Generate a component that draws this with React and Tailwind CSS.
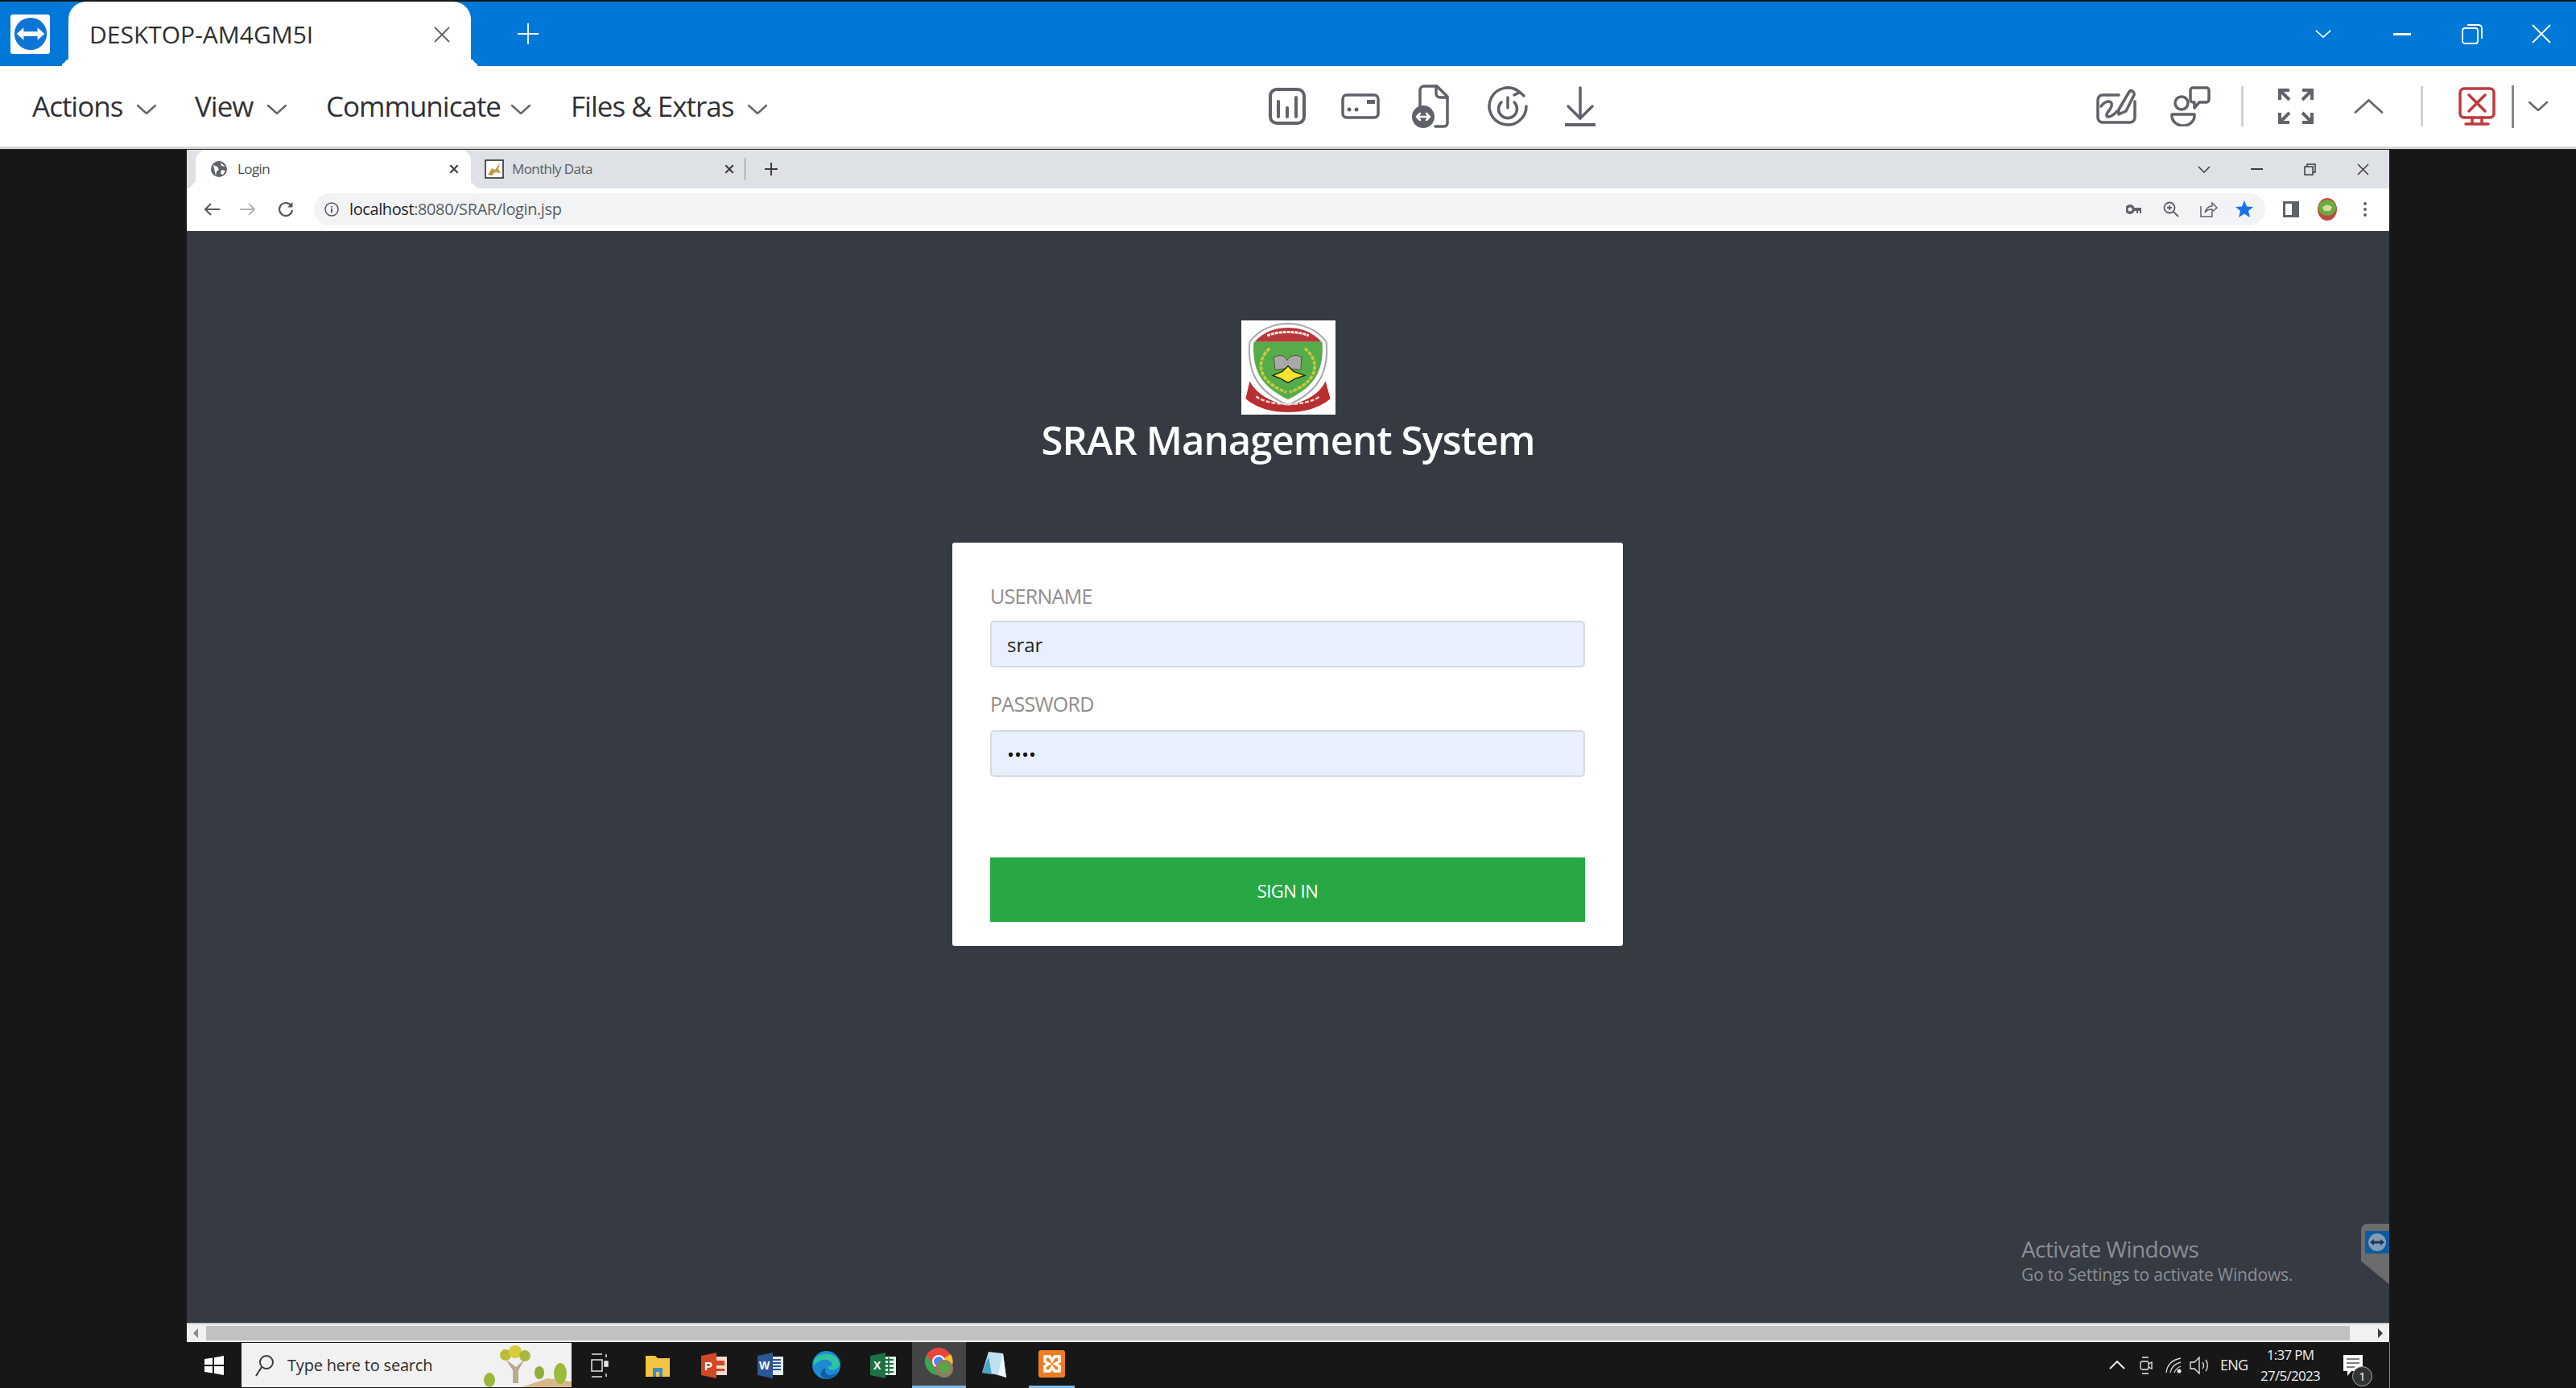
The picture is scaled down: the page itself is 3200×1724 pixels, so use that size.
import React from "react";

const SANS = "font-['Open_Sans','Noto_Sans',sans-serif]";

const TeamViewerLogo = ({ className }) => (
  <svg viewBox="0 0 48 48" className={className}>
    <circle cx="24" cy="24" r="21" fill="#0e75d4" />
    <path d="M6 24 L15 16 V21 H33 V16 L42 24 L33 32 V27 H15 V32 Z" fill="#fff" />
  </svg>
);

const Chevron = ({ className, up, color = "#63666a", width = 2.5 }) => (
  <svg viewBox="0 0 24 12" className={className} fill="none" stroke={color} strokeWidth={width} strokeLinecap="round">
    <path d={up ? "M1 11 L12 1 L23 11" : "M1 1 L12 11 L23 1"} />
  </svg>
);

const MenuItem = ({ label, textClass, chevronClass }) => (
  <div className="flex items-center">
    <span className={textClass}>{label}</span>
    <Chevron className={chevronClass} />
  </div>
);

const RemoteToolbar = () => (
  <div className="flex h-[100px] shrink-0 items-center bg-white">
    <div className={`flex w-[1576px] shrink-0 items-center pl-[40px] text-[35px] tracking-[-1px] text-[#2f3136] ${SANS}`}>
      <MenuItem label="Actions" textClass="w-[130px]" chevronClass="mt-[8px] w-[24px] h-[12px]" />
      <MenuItem label="View" textClass="ml-[48px] w-[90px]" chevronClass="mt-[8px] w-[24px] h-[12px]" />
      <MenuItem label="Communicate" textClass="ml-[49px] w-[230px]" chevronClass="mt-[8px] w-[24px] h-[12px]" />
      <MenuItem label="Files & Extras" textClass="ml-[50px] w-[220px]" chevronClass="mt-[8px] w-[24px] h-[12px]" />
    </div>

    {/* session icons */}
    <svg viewBox="0 0 46 46" className="h-[46px] w-[46px] shrink-0" fill="none" stroke="#5f6268" strokeWidth="4" strokeLinecap="round">
      <rect x="2" y="2" width="42" height="42" rx="8" />
      <path d="M12 17V36M23 25V36M34 12V36" />
    </svg>
    <svg viewBox="0 0 48 32" className="ml-[44px] h-[32px] w-[48px] shrink-0" fill="none" stroke="#5f6268" strokeWidth="3.5">
      <rect x="2" y="2" width="44" height="28" rx="5" />
      <circle cx="10" cy="20" r="2.5" fill="#5f6268" stroke="none" />
      <circle cx="19" cy="20" r="2.5" fill="#5f6268" stroke="none" />
      <rect x="32" y="8" width="10" height="5" fill="#5f6268" stroke="none" />
    </svg>
    <svg viewBox="0 0 48 56" className="ml-[39px] h-[56px] w-[48px] shrink-0" fill="none" stroke="#5f6268" strokeWidth="3.5" strokeLinejoin="round" strokeLinecap="round">
      <path d="M11 28V8a5 5 0 0 1 5-5h16l13 13v33a4 4 0 0 1-4 4H30" />
      <path d="M31 3v9a5 5 0 0 0 5 5h9" />
      <circle cx="15" cy="41" r="14" fill="#5f6268" stroke="none" />
      <path d="M7 41h16M11 37l-4 4 4 4M19 37l4 4-4 4" stroke="#fff" strokeWidth="2.5" />
    </svg>
    <svg viewBox="0 0 50 50" className="ml-[47px] h-[50px] w-[50px] shrink-0" fill="none" stroke="#5f6268" strokeWidth="3.5" strokeLinecap="round" strokeLinejoin="round">
      <path d="M48 25A23 23 0 1 1 40 7.500" />
      <path d="M45 12L40 7.500L33 11" />
      <path d="M17 20a11.500 11.500 0 1 0 16 0M25 14v13" />
    </svg>
    <svg viewBox="0 0 38 50" className="ml-[46px] h-[50px] w-[38px] shrink-0" fill="none" stroke="#5f6268" strokeWidth="3.5" strokeLinecap="round">
      <path d="M19 2V40M4 25L19 40L34 25" />
      <path d="M1 48H37" strokeWidth="4" />
    </svg>

    <svg viewBox="0 0 50 44" className="ml-[622px] h-[44px] w-[50px] shrink-0" fill="none" stroke="#5f6268" strokeWidth="3.5" strokeLinecap="round" strokeLinejoin="round">
      <path d="M28 8H8a6 6 0 0 0-6 6v22a6 6 0 0 0 6 6h34a6 6 0 0 0 6-6V16" />
      <path d="M6 22c6-8 15-8 13 0c-2 6-7 8-6 12c2 3 9-1 13-6" />
      <path d="M28 26L41 4c2-3 7 0 6 4L37 28L28 32Z" />
    </svg>
    <svg viewBox="0 0 50 50" className="ml-[42px] h-[50px] w-[50px] shrink-0" fill="none" stroke="#5f6268" strokeWidth="3.5" strokeLinejoin="round">
      <circle cx="14" cy="21" r="8" />
      <path d="M2 35H30V37A14 12 0 0 1 2 37Z" />
      <path d="M28 2H45a3 3 0 0 1 3 3V17a3 3 0 0 1-3 3H36L30 27V20H28a3 3 0 0 1-3-3V5a3 3 0 0 1 3-3Z" />
    </svg>
    <div className="ml-[38px] h-[50px] w-[3px] shrink-0 bg-[#d2d2d2]" />
    <svg viewBox="0 0 44 44" className="ml-[43px] h-[44px] w-[44px] shrink-0" fill="none" stroke="#5f6268" strokeWidth="4">
      <path d="M2 14V2H14M2 2L14 14M30 2H42V14M42 2L30 14M2 30V42H14M2 42L14 30M30 42H42V30M42 42L30 30" />
    </svg>
    <Chevron up className="ml-[50px] h-[18px] w-[37px] shrink-0" width={1.8} />
    <div className="ml-[46px] h-[50px] w-[3px] shrink-0 bg-[#d2d2d2]" />
    <svg viewBox="0 0 46 48" className="ml-[44px] h-[48px] w-[46px] shrink-0" fill="none" stroke="#c0393b" strokeWidth="3.5" strokeLinecap="round">
      <rect x="2" y="2" width="42" height="36" rx="5" />
      <path d="M13 10L33 30M33 10L13 30M17 38V46M29 38V46M9 46H37" />
    </svg>
    <div className="ml-[20px] h-[53px] w-[3px] shrink-0 bg-[#84868a]" />
    <Chevron className="ml-[18px] h-[12px] w-[24px] shrink-0" />
  </div>
);

const TabClose = ({ className }) => (
  <svg viewBox="0 0 12 12" className={className} fill="none" stroke="#3a3c40" strokeWidth="1.800">
    <path d="M2 2L10 10M10 2L2 10" />
  </svg>
);

const Emblem = () => (
  <svg viewBox="0 0 112 118" className="h-[117px] w-[112px]">
    <path d="M8 27 C20 10 40 4 56 4 C72 4 92 10 104 27 C107 60 98 88 56 106 C14 88 5 60 8 27Z" fill="#fff" stroke="#a5a5aa" strokeWidth="2" />
    <path d="M14 27 C26 13 42 9 56 9 C70 9 86 13 98 27Z" fill="#b8383a" />
    <path d="M13 27 H99 C101 60 92 82 56 99 C20 82 11 60 13 27Z" fill="#56ac49" />
    <path d="M33 35 C16 50 16 76 54 90 M77 35 C96 50 96 76 58 90" fill="none" stroke="#c9cc3e" strokeWidth="3.500" strokeDasharray="5 1.500" />
    <path d="M38 46 C46 42 52 44 55 50 C58 44 66 42 73 46 L72 62 L55 60 L40 62Z" fill="#a9a9a7" stroke="#4c4f48" strokeWidth="1" />
    <path d="M37 69 L49 64 L56 57 L63 64 L77 69 L65 73 L56 78 L47 73Z" fill="#f4e42e" stroke="#1f2a1a" strokeWidth="1.500" />
    <path d="M8 76 C16 92 34 102 56 107 C78 102 96 92 103 76 L109 98 C92 112 72 115 56 115 C40 115 20 112 3 98Z" fill="#b92e30" />
    <path d="M16 95 C32 108 80 108 96 95" fill="none" stroke="#efd8cf" strokeWidth="2.500" strokeDasharray="5 2" />
    <path d="M30 19 C44 13 68 13 82 19" fill="none" stroke="#fbeeee" strokeWidth="3" strokeDasharray="4 1" />
  </svg>
);

const LoginCard = () => (
  <div className={`mr-[1px] mt-[97px] h-[501px] w-[833px] rounded-[3px] bg-white px-[47px] pt-[50px] ${SANS}`}>
    <label className="block h-[32px] text-[25px] leading-[32px] tracking-[-0.7px] text-[#8d8d8d]">USERNAME</label>
    <input
      readOnly
      value="srar"
      className="mt-[15px] block h-[58px] w-full rounded-[5px] border-2 border-[#d5d9e0] bg-[#e8f0fe] px-[19px] text-[24px] text-[#222] outline-none"
    />
    <label className="mt-[29px] block h-[32px] text-[25px] leading-[32px] tracking-[-0.7px] text-[#8d8d8d]">PASSWORD</label>
    <input
      readOnly
      type="password"
      value="srar"
      className="mt-[17px] block h-[58px] w-full rounded-[5px] border-2 border-[#d5d9e0] bg-[#e8f0fe] px-[19px] text-[24px] text-[#111] outline-none"
    />
    <button className="mt-[100px] flex h-[80px] w-full items-center justify-center bg-[#28a745] pt-[3px] text-[22px] tracking-[-0.5px] text-white">
      SIGN IN
    </button>
  </div>
);

const BrowserWindow = () => (
  <div className="relative flex w-[2736px] flex-col">
    {/* tabs */}
    <div className={`flex h-[48px] shrink-0 items-center bg-[#dee1e6] pl-[11px] text-[17px] ${SANS}`}>
      <div className="relative flex h-full w-[342px] items-center rounded-t-[14px] bg-white pl-[19px]">
        <span className="absolute bottom-0 left-[-14px] h-[14px] w-[14px] rounded-br-[14px] shadow-[7px_7px_0_0_#fff]" />
        <span className="absolute bottom-0 right-[-14px] h-[14px] w-[14px] rounded-bl-[14px] shadow-[-7px_7px_0_0_#fff]" />
        <svg viewBox="0 0 20 20" className="h-[20px] w-[20px]">
          <circle cx="10" cy="10" r="10" fill="#5f6368" />
          <path d="M3 5l5 2 2 4-3 2-1 5M12 2l1 4 5 1M13 11l5 1-3 5-3-1Z" fill="#fff" />
        </svg>
        <span className="ml-[13px] tracking-[-0.6px] text-[#4a4c50]">Login</span>
        <TabClose className="ml-auto mr-[14px] h-[14px] w-[14px]" />
      </div>
      <div className="flex h-full w-[340px] items-center pl-[17px]">
        <svg viewBox="0 0 24 24" className="h-[24px] w-[24px]">
          <rect x="1" y="1" width="22" height="22" fill="#fff" stroke="#222" strokeWidth="1.500" />
          <path d="M4 19L9 11L13 13L19 4L17 12L20 17L13 16L9 20Z" fill="#c59a4a" />
        </svg>
        <span className="ml-[10px] tracking-[-0.6px] text-[#5b5d61]">Monthly Data</span>
        <TabClose className="ml-auto mr-[12px] h-[14px] w-[14px]" />
      </div>
      <div className="h-[28px] w-[1px] bg-[#8a8c90]" />
      <svg viewBox="0 0 18 18" className="ml-[23px] h-[18px] w-[18px]" fill="none" stroke="#3a3c40" strokeWidth="2">
        <path d="M9 1V17M1 9H17" />
      </svg>
      <svg viewBox="0 0 16 9" className="ml-auto h-[9px] w-[16px]" fill="none" stroke="#3a3c40" strokeWidth="1.500">
        <path d="M1 1L8 8L15 1" />
      </svg>
      <div className="ml-[50px] h-[2px] w-[15px] bg-[#3a3c40]" />
      <svg viewBox="0 0 15 15" className="ml-[51px] h-[15px] w-[15px]" fill="none" stroke="#3a3c40" strokeWidth="1.500">
        <rect x="1" y="4" width="10" height="10" />
        <path d="M4 4V1H14V11H11" />
      </svg>
      <svg viewBox="0 0 15 15" className="ml-[51px] mr-[25px] h-[15px] w-[15px]" fill="none" stroke="#3a3c40" strokeWidth="1.500">
        <path d="M1 1L14 14M14 1L1 14" />
      </svg>
    </div>

    {/* address bar */}
    <div className={`flex h-[53px] shrink-0 items-center bg-white pb-[2px] pl-[21px] ${SANS}`}>
      <svg viewBox="0 0 20 18" className="h-[18px] w-[20px]" fill="none" stroke="#55585c" strokeWidth="2">
        <path d="M20 9H2M9 2L2 9L9 16" />
      </svg>
      <svg viewBox="0 0 20 18" className="ml-[25px] h-[18px] w-[20px]" fill="none" stroke="#b2b4b8" strokeWidth="2">
        <path d="M0 9H18M11 2L18 9L11 16" />
      </svg>
      <svg viewBox="0 0 20 20" className="ml-[27px] h-[20px] w-[20px]" fill="none" stroke="#55585c" strokeWidth="2.200">
        <path d="M17 6A8 8 0 1 0 18 11" />
        <path d="M18.500 1V7.500H12Z" fill="#55585c" stroke="none" />
      </svg>
      <div className="ml-[25px] flex h-[40px] w-[2424px] items-center rounded-full bg-[#f1f3f4] pl-[13px]">
        <svg viewBox="0 0 18 18" className="h-[18px] w-[18px]" fill="none" stroke="#55585c" strokeWidth="1.500">
          <circle cx="9" cy="9" r="8" />
          <path d="M9 8V13M9 5V6.500" strokeWidth="2" />
        </svg>
        <span className="ml-[13px] text-[20px] tracking-[-0.4px] text-[#5b5d61]">
          <span className="text-[#222428]">localhost</span>:8080/SRAR/login.jsp
        </span>
        <svg viewBox="0 0 20 12" className="ml-auto h-[12px] w-[20px]" fill="#5f6368">
          <path d="M5 0a6 6 0 1 0 5.500 8H13v3h2V8h2v3h2V4H10.500A6 6 0 0 0 5 0Zm0 3.500a2.500 2.500 0 1 1 0 5a2.500 2.500 0 0 1 0-5Z" />
        </svg>
        <svg viewBox="0 0 20 20" className="ml-[26px] h-[20px] w-[20px]" fill="none" stroke="#5f6368" strokeWidth="1.800">
          <circle cx="8" cy="8" r="6.500" />
          <path d="M13 13L19 19M8 5V11M5 8H11" />
        </svg>
        <svg viewBox="0 0 22 20" className="ml-[26px] h-[20px] w-[22px]" fill="none" stroke="#5f6368" strokeWidth="1.500">
          <path d="M1 6V19H15V14M6 14C7 9 11 6 15 6V2L21 8L15 13V10C11 10 8 11 6 14Z" />
        </svg>
        <svg viewBox="0 0 22 21" className="ml-[22px] mr-[15px] h-[21px] w-[22px]" fill="#1a73e8">
          <path d="M11 0L14 7.500L22 8L16 13L18 21L11 16.500L4 21L6 13L0 8L8 7.500Z" />
        </svg>
      </div>
      <div className="ml-[22px] h-[20px] w-[20px] border-[3px] border-r-[9px] border-[#5f6368] bg-white" />
      <svg viewBox="0 0 26 28" className="ml-[22px] h-[28px] w-[26px]">
        <ellipse cx="13" cy="14" rx="12" ry="14" fill="#c2483f" />
        <ellipse cx="13" cy="12" rx="11" ry="10" fill="#66ad3e" />
        <path d="M7 11L13 8L19 11L17 16H9Z" fill="#d8d8a0" />
      </svg>
      <svg viewBox="0 0 4 18" className="ml-[32px] h-[18px] w-[4px]" fill="#5f6368">
        <circle cx="2" cy="2" r="2" />
        <circle cx="2" cy="9" r="2" />
        <circle cx="2" cy="16" r="2" />
      </svg>
    </div>

    {/* page */}
    <div className="relative flex flex-1 flex-col items-center bg-[#363a42] pt-[111px]">
      <div className="flex h-[117px] w-[117px] items-center justify-center bg-white">
        <Emblem />
      </div>
      <h1 className={`text-[49px] leading-[62px] font-semibold tracking-[-0.9px] text-white ${SANS}`}>
        SRAR Management System
      </h1>
      <LoginCard />

      <div className={`absolute bottom-[45px] left-[2279px] text-[#8b8e93] ${SANS}`}>
        <div className="text-[28px] leading-[34px] tracking-[-0.6px]">Activate Windows</div>
        <div className="text-[21px] leading-[30px] tracking-[-0.2px]">Go to Settings to activate Windows.</div>
      </div>
      <div className="absolute bottom-[48px] right-0 h-[75px] w-[35px] rounded-tl-[8px] bg-[#6b6c6e] [clip-path:polygon(0_0,100%_0,100%_100%,0_62%)]">
        <div className="ml-[5px] mt-[9px] flex h-[28px] w-[30px] items-center justify-center bg-[#0b5c9e]">
          <svg viewBox="0 0 24 24" className="h-[24px] w-[24px]">
            <circle cx="12" cy="12" r="11" fill="#7f9cb8" />
            <path d="M3 12L8 8V10.500H16V8L21 12L16 16V13.500H8V16Z" fill="#20374e" />
          </svg>
        </div>
      </div>
    </div>

    {/* horizontal scrollbar */}
    <div className="flex h-[24px] shrink-0 items-center border-t-[2px] border-[#c9cace] bg-[#f1f1f1] pl-[8px] pr-[8px]">
      <div className="h-0 w-0 border-y-[6px] border-r-[6px] border-y-transparent border-r-[#8a8a8a]" />
      <div className="ml-[10px] h-[18px] w-[2663px] bg-[#c1c1c1]" />
      <div className="ml-auto h-0 w-0 border-y-[6px] border-l-[6px] border-y-transparent border-l-[#3e3e3e]" />
    </div>

    <Taskbar />
  </div>
);

const Taskbar = () => (
  <div className={`flex h-[57px] shrink-0 items-center bg-[#171717] ${SANS}`}>
    <svg viewBox="0 0 24 24" className="ml-[22px] h-[24px] w-[24px] shrink-0" fill="#fff">
      <path d="M0 4L10 2.500V11H0ZM12 2.200L24 0V11H12ZM0 13H10V21.500L0 20ZM12 13H24V24L12 21.800Z" />
    </svg>
    <div className="ml-[22px] flex h-[55px] w-[410px] shrink-0 items-center overflow-hidden bg-[#f1f1f1] pl-[17px]">
      <svg viewBox="0 0 24 28" className="h-[28px] w-[24px]" fill="none" stroke="#3a3a3a" strokeWidth="2">
        <circle cx="14" cy="10" r="8" />
        <path d="M8 16L1 27" />
      </svg>
      <span className="ml-[16px] text-[20px] tracking-[-0.2px] text-[#2c2c2c]">Type here to search</span>
      <svg viewBox="0 0 110 55" className="ml-auto h-[55px] w-[110px]">
        <path d="M48 55L80 44L110 48V55Z" fill="#d8b88a" />
        <path d="M28 20L37 34V50H44V34L52 20L41 30Z" fill="#b9a98d" />
        <circle cx="28" cy="15" r="7" fill="#b9bb3a" />
        <circle cx="40" cy="11" r="8" fill="#d7cc3c" />
        <circle cx="52" cy="16" r="7" fill="#a8b93f" />
        <ellipse cx="8" cy="46" rx="7" ry="9" fill="#9cb83a" />
        <ellipse cx="70" cy="37" rx="6" ry="8" fill="#8eae36" />
        <ellipse cx="96" cy="38" rx="8" ry="13" fill="#9cbb3c" />
      </svg>
    </div>

    <svg viewBox="0 0 24 32" className="ml-[23px] h-[32px] w-[24px] shrink-0" fill="none" stroke="#e8e8e8" strokeWidth="1.500">
      <path d="M2 2H15M2 30H15" />
      <rect x="2" y="9" width="13" height="14" />
      <path d="M20 2V6M20 26V30" />
      <rect x="18" y="11" width="4" height="6" fill="#e8e8e8" />
    </svg>
    <svg viewBox="0 0 30 30" className="ml-[45px] h-[30px] w-[30px] shrink-0">
      <path d="M0 3H12L15 6H30V29H0Z" fill="#f4c542" />
      <path d="M9 29V18H21V29H17V23H13V29Z" fill="#3d8ed0" />
    </svg>
    <svg viewBox="0 0 32 32" className="ml-[39px] h-[32px] w-[32px] shrink-0">
      <rect x="13" y="5" width="19" height="23" fill="#f3d9d0" />
      <path d="M17 10H29V16H17ZM17 20H29V23H17Z" fill="#d24726" />
      <path d="M0 4L19 0V32L0 28Z" fill="#d24726" />
      <text x="4" y="22" fontSize="15" fontWeight="700" fill="#fff" fontFamily="Liberation Sans">P</text>
    </svg>
    <svg viewBox="0 0 32 32" className="ml-[38px] h-[32px] w-[32px] shrink-0">
      <rect x="14" y="5" width="18" height="23" fill="#e8eef8" />
      <path d="M18 9H29M18 13H29M18 17H29M18 21H29" stroke="#2b5797" strokeWidth="2" />
      <path d="M0 4L19 0V32L0 28Z" fill="#2b5797" />
      <text x="2" y="21" fontSize="14" fontWeight="700" fill="#fff" fontFamily="Liberation Sans">W</text>
    </svg>
    <svg viewBox="0 0 36 36" className="ml-[36px] h-[35px] w-[35px] shrink-0">
      <circle cx="18" cy="18" r="18" fill="#1c8bd4" />
      <path d="M2 12C6 2 30 -2 35 16C35 22 30 24 25 24C22 24 20 22 20 20C30 20 24 10 16 11C8 12 3 16 2 20Z" fill="#2fc4a1" />
      <path d="M17 22C14 30 24 35 32 26C28 34 20 38 13 34C9 30 12 22 17 22Z" fill="#0c5fa6" />
    </svg>
    <svg viewBox="0 0 32 32" className="ml-[37px] h-[32px] w-[32px] shrink-0">
      <rect x="14" y="5" width="18" height="23" fill="#e6f2ea" />
      <path d="M18 9H29M18 14H29M18 19H29M18 24H29M23 6V27" stroke="#1e7145" strokeWidth="1.800" />
      <path d="M0 4L19 0V32L0 28Z" fill="#1e7145" />
      <text x="4" y="21" fontSize="14" fontWeight="700" fill="#fff" fontFamily="Liberation Sans">X</text>
    </svg>
    <div className="ml-[20px] flex h-full w-[67px] shrink-0 items-center justify-center border-b-[3px] border-[#7fb8e6] bg-[#444]">
      <svg viewBox="0 0 36 40" className="h-[40px] w-[36px]">
        <circle cx="17" cy="17" r="17" fill="#e8453c" />
        <path d="M17 17L32 8A17 17 0 0 1 17 34Z" fill="#f7c02e" />
        <path d="M2 9L17 34A17 17 0 0 1 2 9Z" fill="#34a853" />
        <circle cx="17" cy="17" r="7" fill="#4a8af4" stroke="#fff" strokeWidth="2" />
        <circle cx="24" cy="26" r="11" fill="#8f7d62" />
        <circle cx="24" cy="25" r="7" fill="#5aa548" />
      </svg>
    </div>
    <svg viewBox="0 0 34 38" className="ml-[18px] h-[38px] w-[34px] shrink-0">
      <path d="M10 2L28 4L32 34L18 30L2 28Z" fill="#bfe0ee" />
      <path d="M28 4L32 34L22 30Z" fill="#eef7fb" />
      <path d="M2 28L10 8L14 30Z" fill="#4ea3c8" />
    </svg>
    <div className="ml-[26px] flex h-full w-[57px] shrink-0 items-center justify-center border-b-[3px] border-[#7fb8e6]">
      <div className="flex h-[34px] w-[33px] items-center justify-center rounded-[3px] bg-[#ee7e22]">
        <svg viewBox="0 0 24 24" className="h-[24px] w-[24px]" fill="none" stroke="#fff" strokeWidth="3.500">
          <path d="M3 3H9L12 8L15 3H21V9L16 12L21 15V21H15L12 16L9 21H3V15L8 12L3 9Z" />
        </svg>
      </div>
    </div>

    {/* tray */}
    <svg viewBox="0 0 20 11" className="ml-[1285px] h-[11px] w-[20px] shrink-0" fill="none" stroke="#eee" strokeWidth="2">
      <path d="M1 10L10 1L19 10" />
    </svg>
    <svg viewBox="0 0 16 24" className="ml-[18px] h-[24px] w-[16px] shrink-0" fill="none" stroke="#eee" strokeWidth="1.300">
      <path d="M3 2H11M3 22H11" />
      <rect x="1" y="7" width="10" height="10" rx="2" />
      <path d="M11 10L15 8V16L11 14" />
    </svg>
    <svg viewBox="0 0 20 20" className="ml-[16px] h-[20px] w-[20px] shrink-0" fill="none" stroke="#d8d8d8" strokeWidth="1.300">
      <path d="M1 19C2 10 8 3 19 1M6 19C7 13 11 8 19 6M11 19C12 16 14 13 19 11" />
      <circle cx="17" cy="17" r="2.500" fill="#eee" stroke="none" />
    </svg>
    <svg viewBox="0 0 25 24" className="ml-[10px] h-[24px] w-[25px] shrink-0" fill="none" stroke="#eee" strokeWidth="1.300">
      <path d="M1 8H6L12 2V22L6 16H1Z" />
      <path d="M16 8C18 10 18 14 16 16M20 5C23 9 23 15 20 19" />
    </svg>
    <span className="ml-[13px] w-[36px] shrink-0 text-[18px] tracking-[-0.8px] text-[#eee]">ENG</span>
    <div className="ml-[11px] flex w-[80px] shrink-0 flex-col items-center text-[17px] leading-[26px] tracking-[-0.7px] text-[#eee]">
      <span>1:37 PM</span>
      <span>27/5/2023</span>
    </div>
    <div className="relative ml-[26px] h-[26px] w-[24px] shrink-0">
      <svg viewBox="0 0 24 26" className="h-[26px] w-[24px]">
        <path d="M0 0H24V20H10L5 26V20H0Z" fill="#fff" />
        <path d="M4 5H20M4 10H20M4 15H14" stroke="#555" strokeWidth="1.500" />
      </svg>
      <span className="absolute left-[11px] top-[14px] flex h-[25px] w-[25px] items-center justify-center rounded-full border border-[#aaa] bg-[#333] text-[15px] text-white">1</span>
    </div>
    <div className="ml-[33px] h-full w-[1px] shrink-0 bg-[#8a8a8a]" />
  </div>
);

export default function App() {
  return (
    <div className="flex h-[1724px] w-[3200px] flex-col overflow-hidden bg-[#171717]">
      {/* TeamViewer title bar */}
      <div className="mt-[2px] flex h-[80px] shrink-0 items-center bg-[#0078d7]">
        <div className="ml-[13px] flex h-[49px] w-[49px] shrink-0 items-center justify-center rounded-[3px] bg-white">
          <TeamViewerLogo className="h-[46px] w-[46px]" />
        </div>
        <div className={`relative ml-[23px] flex h-full w-[500px] shrink-0 items-center rounded-t-[22px] bg-white pl-[26px] text-[30px] text-[#2d2f33] ${SANS}`}>
          <span className="absolute bottom-0 left-[-16px] h-[16px] w-[16px] rounded-br-[16px] shadow-[8px_8px_0_0_#fff]" />
          <span className="absolute bottom-0 right-[-16px] h-[16px] w-[16px] rounded-bl-[16px] shadow-[-8px_8px_0_0_#fff]" />
          DESKTOP-AM4GM5I
          <svg viewBox="0 0 20 20" className="absolute right-[26px] top-[31px] h-[20px] w-[20px]" fill="none" stroke="#5f6268" strokeWidth="1.800">
            <path d="M1 1L19 19M19 1L1 19" />
          </svg>
        </div>
        <svg viewBox="0 0 26 26" className="ml-[58px] h-[26px] w-[26px] shrink-0" fill="none" stroke="#fff" strokeWidth="1.800">
          <path d="M13 0V26M0 13H26" />
        </svg>
        <svg viewBox="0 0 24 12" className="ml-[2207px] h-[12px] w-[20px] shrink-0" fill="none" stroke="#fff" strokeWidth="2">
          <path d="M1 1L12 11L23 1" />
        </svg>
        <div className="ml-[77px] h-[3px] w-[22px] shrink-0 bg-white" />
        <svg viewBox="0 0 26 26" className="ml-[63px] h-[26px] w-[26px] shrink-0" fill="none" stroke="#fff" strokeWidth="1.800">
          <rect x="1" y="6" width="19" height="19" rx="3" />
          <path d="M7 2H21a4 4 0 0 1 4 4V19" />
        </svg>
        <svg viewBox="0 0 24 24" className="ml-[61px] h-[24px] w-[24px] shrink-0" fill="none" stroke="#fff" strokeWidth="1.800">
          <path d="M1 1L23 23M23 1L1 23" />
        </svg>
      </div>

      <RemoteToolbar />
      <div className="h-[3px] shrink-0 bg-[#d4d4d4]" />
      <div className="h-[1px] shrink-0 bg-[#2a2a2a]" />

      <div className="flex min-h-0 flex-1 justify-center">
        <BrowserWindow />
      </div>
    </div>
  );
}
